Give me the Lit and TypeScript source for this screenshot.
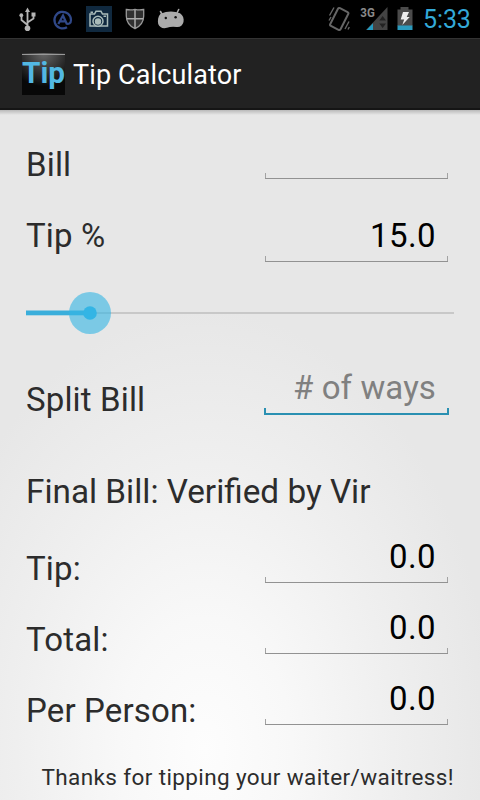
import { LitElement, html, css } from "lit";
import { customElement, property } from "lit/decorators.js";

@customElement("status-bar")
class StatusBar extends LitElement {
  static styles = css`
    :host { display: flex; height: 38px; background: #000; position: relative; }
    svg { display: block; flex: none; }
    .spacer { flex: 1; }
    .clock {
      font: 25px/38px Roboto, sans-serif;
      color: #33a9d8;
      width: 57px;
      padding-top: 1px;
      box-sizing: border-box;
      white-space: nowrap;
      letter-spacing: -0.1px;
    }
    .net { font: 700 12px Roboto, sans-serif; fill: #8a8a8a; }
  `;
  render() {
    return html`
      <svg width="190" height="38" viewBox="0 0 190 38">
        <g fill="none" stroke="#b4b4b4" stroke-width="1.8">
          <path d="M27.5 28V11M27.5 25L21.5 20V15.5M27.5 22.5L33.5 18.5V15" />
        </g>
        <g fill="#b4b4b4">
          <path d="M27.5 7.5L30 12H25Z" />
          <circle cx="27.5" cy="28.3" r="2.8" />
          <circle cx="21.3" cy="15.2" r="1.9" />
          <rect x="31.5" y="12.5" width="4" height="4" />
        </g>
        <g fill="none" stroke="#304888" stroke-width="2.2">
          <path d="M67 27.2A8.3 8.3 0 1 1 71 20C71 23.6 68.5 24.2 66.7 23.8L63 15.5L58.3 24M60.4 21.3H65.2" />
        </g>
        <rect x="86" y="6" width="26" height="26" fill="#10293f" />
        <g fill="none" stroke="#a9bbb9" stroke-width="1.5">
          <path d="M90 14H94.5L96 11.3H101L102.5 14H107.5V26H90Z" />
          <circle cx="98" cy="21.3" r="5" fill="#10293f" />
          <path d="M103.5 16.2H106M90.5 12.2H93" />
        </g>
        <circle cx="98" cy="21.5" r="3.2" fill="#a9bbb9" />
        <path d="M135 9.3C137.5 10 141 10 143.7 9.5V16C143.7 22 140.5 26 135 28.7C129.5 26 126.3 22 126.3 16V9.5C129 10 132.5 10 135 9.3Z" fill="#303030" stroke="#999" stroke-width="1.3" />
        <path d="M135 10V28M127 18.8H143" stroke="#aaa" stroke-width="1.5" />
        <g fill="#ababab">
          <path d="M160.5 13.7Q170.5 9.5 180 13.2C183 15 184.2 18.5 183.5 22C182.7 25.5 180 27.5 176.5 27Q171 26.3 167 27.8C163 29 159.5 27.5 158.2 24C157.5 20 158 16.5 160.5 13.7Z" />
          <path d="M162.5 15L160.5 11.5M177 13L178.7 9.5" stroke="#ababab" stroke-width="1.6" stroke-linecap="round" />
        </g>
        <circle cx="165.8" cy="18" r="1.2" fill="#111" />
        <circle cx="175.6" cy="17.2" r="1.2" fill="#111" />
      </svg>
      <div class="spacer"></div>
      <svg width="98" height="38" viewBox="325 0 98 38">
        <g fill="none" stroke="#666" stroke-width="1.4">
          <rect x="333.5" y="9" width="11.5" height="20" rx="1.5" transform="rotate(27 339.25 19)" stroke-width="2" />
          <path d="M329.5 15.5L334 7.5M329 20.5L331 17M345 29L349 21.5M348 29.5L349.3 27" />
        </g>
        <path d="M387.5 7V30H366Z" fill="#444" />
        <path d="M373 23.2V30H366.5Z" fill="#249ac0" />
        <path d="M379.3 20.5L382.6 16L386 20.5ZM379.3 23.5L382.6 28L386 23.5Z" fill="#222" />
        <text class="net" x="360.3" y="17" textLength="14.5" lengthAdjust="spacingAndGlyphs">3G</text>
        <path d="M400.5 7H408.5V9.5H412.5V26H397.5V9.5H400.5Z" fill="#4b4b4b" />
        <rect x="397.5" y="25.5" width="15" height="4.5" fill="#2b9abd" />
        <path d="M403 12H409L406.7 17H409.7L402.3 25L404.2 19.5H400.7Z" fill="#eee" />
      </svg>
      <div class="clock">5:33</div>
    `;
  }
}

@customElement("entry-field")
class EntryField extends LitElement {
  @property() value = "";
  @property() hint = "";
  @property({ type: Boolean, reflect: true }) focused = false;
  static styles = css`
    :host {
      display: block;
      box-sizing: border-box;
      width: 183px;
      height: 54px;
      position: relative;
      padding: 8px 12px 0 0;
      border-bottom: 1px solid #929292;
      text-align: right;
      font: 33px/40px Roboto, sans-serif;
      letter-spacing: 0.4px;
      color: #000;
      white-space: nowrap;
    }
    :host::after {
      content: "";
      position: absolute;
      left: 0;
      right: 0;
      bottom: 0;
      height: 5px;
      border: solid #a2a2a2;
      border-width: 0 1px;
    }
    :host([focused]) {
      width: 185px;
      height: 55px;
      margin: 0 -1px;
      padding-right: 13px;
      letter-spacing: 0.1px;
      border-bottom: 2px solid #2a90b2;
    }
    :host([focused])::after { border-color: #2a90b2; border-width: 0 2px; }
    .hint { color: #808080; }
  `;
  render() {
    return this.value ? html`${this.value}` : html`<span class="hint">${this.hint}</span>`;
  }
}

@customElement("app-root")
class AppRoot extends LitElement {
  static styles = css`
    :host {
      display: flex;
      flex-direction: column;
      width: 480px;
      height: 800px;
      overflow: hidden;
      font-family: Roboto, sans-serif;
      color: #2c2c2c;
    }
    .action {
      display: flex;
      align-items: center;
      box-sizing: border-box;
      height: 72px;
      padding-left: 22px;
      background: #222;
      border-top: 1px solid #333;
      border-bottom: 2px solid #151515;
      color: #fff;
      font-size: 27px;
      white-space: nowrap;
    }
    .logo { display: block; margin-right: 8px; }
    .mark { font: 700 29px Roboto, sans-serif; fill: #52b8e3; }
    .title { line-height: 40px; padding-top: 3px; letter-spacing: 0.13px; }
    .body {
      flex: 1;
      display: flex;
      flex-direction: column;
      background:
        linear-gradient(rgba(0, 0, 0, 0.2), transparent) 0 0 / 100% 5px no-repeat,
        radial-gradient(ellipse 290px 440px at 205px 640px, #fdfdfd, #f8f8f8 30%, #efefef 65%, #e7e7e7);
    }
    .row {
      display: flex;
      justify-content: space-between;
      align-items: flex-end;
      height: 71px;
      padding: 0 32px 0 26px;
      font-size: 33px;
      line-height: 40px;
      white-space: nowrap;
    }
    .bill { height: 69px; }
    .tip { height: 83px; }
    .split { height: 82px; }
    .label { margin-bottom: -6px; letter-spacing: 0.15px; }
    .tip .label { margin-bottom: 6px; }
    .split .label { margin-bottom: -5px; }
    .seek { display: block; height: 71px; flex: none; overflow: visible; }
    .final {
      height: 97px;
      box-sizing: border-box;
      padding: 57px 26px 0;
      font-size: 33.3px;
      line-height: 40px;
      white-space: nowrap;
    }
    .thanks {
      margin-top: 38px;
      padding-right: 26px;
      text-align: right;
      font-size: 22.5px;
      line-height: 28px;
      letter-spacing: 0.38px;
      white-space: nowrap;
    }
  `;
  results = ["Tip:", "Total:", "Per Person:"];
  render() {
    return html`
      <status-bar></status-bar>
      <div class="action">
        <svg class="logo" width="43" height="42" viewBox="0 0 43 42">
          <defs>
            <radialGradient id="glow" cx="50%" cy="0%" r="80%">
              <stop offset="0" stop-color="#686868" />
              <stop offset="1" stop-color="#080808" />
            </radialGradient>
          </defs>
          <rect width="43" height="42" fill="url(#glow)" />
          <rect y="1" width="43" height="1" fill="#999" />
          <text class="mark" x="0" y="30" textLength="43" lengthAdjust="spacingAndGlyphs">Tip</text>
        </svg>
        <span class="title">Tip Calculator</span>
      </div>
      <div class="body">
        <div class="row bill"><span class="label">Bill</span><entry-field></entry-field></div>
        <div class="row tip"><span class="label">Tip %</span><entry-field value="15.0"></entry-field></div>
        <svg class="seek" width="480" height="71" viewBox="0 262 480 71">
          <rect x="26" y="312" width="428" height="2" fill="#c8c8c8" />
          <rect x="26" y="310.5" width="64" height="4.8" fill="#3aaedb" />
          <circle cx="90" cy="313" r="21" fill="#33b5e5" fill-opacity="0.6" />
          <circle cx="90" cy="313" r="6.8" fill="#33b5e5" />
        </svg>
        <div class="row split"><span class="label">Split Bill</span><entry-field focused hint="# of ways"></entry-field></div>
        <div class="final">Final Bill: Verified by Vir</div>
        ${this.results.map(
          (name) => html`<div class="row"><span class="label">${name}</span><entry-field value="0.0"></entry-field></div>`
        )}
        <div class="thanks">Thanks for tipping your waiter/waitress!</div>
      </div>
    `;
  }
}
